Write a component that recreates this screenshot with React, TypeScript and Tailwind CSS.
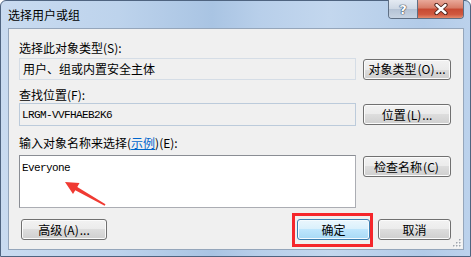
import type { ReactNode } from 'react';

const FONT = "font-['Noto_Sans_CJK_SC','Noto_Sans',sans-serif]";
const MONO = "font-['Liberation_Mono','DejaVu_Sans_Mono',monospace] text-[11px] tracking-[-0.6px]";

function Btn({ children, className = '', primary = false }: { children: ReactNode; className?: string; primary?: boolean }) {
  const look = primary
    ? 'border-[#3c7fb1] bg-[linear-gradient(#eaf6fd_0%,#d9f0fc_50%,#bee6fd_50%,#a7d9f5_100%)] shadow-[inset_0_0_0_1px_#f4fbff]'
    : 'border-[#707070] bg-[linear-gradient(#f2f2f2_0%,#ebebeb_50%,#dddddd_50%,#cfcfcf_100%)] shadow-[inset_0_0_0_1px_#fbfbfb]';
  return (
    <div className={`flex shrink-0 items-center justify-center rounded-[3px] border ${look} ${className}`}>
      {children}
    </div>
  );
}

function Hot({ k }: { k: string }) {
  return <span className="px-[1px]">({k})</span>;
}

export default function App() {
  return (
    <div className={`relative h-[257px] w-[471px] overflow-hidden bg-white text-[12px] leading-[14px] text-black ${FONT}`}>
      <div className="flex h-full w-full flex-col rounded-t-[6px] border border-[#4f6480] bg-[linear-gradient(90deg,#c9dbf0_0%,#bdd3ec_25%,#a9c4e3_45%,#b8cfea_55%,#c3d7ee_70%,#b2cbe8_90%,#bcd2ec_100%)]">
        {/* title bar */}
        <div className="flex h-[27px] shrink-0 items-start">
          <div className="self-center pl-[7px] text-[12px] leading-[14px] text-black">选择用户或组</div>
          <div className="ml-auto mr-[6px] -mt-px flex h-[19px] overflow-hidden rounded-b-[4px] border border-t-0 border-[#5f6f84]">
            <div className="flex w-[29px] items-center justify-center border-r border-[#5f6f84] bg-[linear-gradient(#e4eaf2_0%,#cdd7e4_50%,#b4c2d4_50%,#c7d3e2_100%)]">
              <span className="font-['DejaVu_Sans',sans-serif] text-[13px] font-bold leading-none text-white [text-shadow:0_0_1px_#2d3b50,0_0_1px_#2d3b50,0_0_1px_#2d3b50]">?</span>
            </div>
            <div className="flex w-[45px] items-center justify-center bg-[linear-gradient(#e9a99a_0%,#d77b66_45%,#c74a33_50%,#d0583f_80%,#e38a6c_100%)]">
              <svg width="14" height="12" viewBox="0 0 14 12">
                <path d="M2.5 2 L11.5 10 M11.5 2 L2.5 10" stroke="#4a2018" strokeWidth="4.2" strokeLinecap="round" />
                <path d="M2.5 2 L11.5 10 M11.5 2 L2.5 10" stroke="#ffffff" strokeWidth="2.4" strokeLinecap="round" />
              </svg>
            </div>
          </div>
        </div>

        {/* client area */}
        <div className="relative ml-[7px] mr-[6px] mb-[6px] flex flex-1 flex-col border border-[#95a6bb] bg-[#f0f0f0] pl-[10px] pr-[12px] pt-[12px]">
          <div>选择此对象类型(S):</div>
          <div className="mt-[3px] flex items-center gap-[7px]">
            <div className="flex h-[22px] w-[337px] items-center border border-[#d5dde6] bg-[#f0f0f0] pl-[3px]">
              用户、组或内置安全主体
            </div>
            <Btn className="h-[21px] w-[88px]">
              对象类型<Hot k="O" />...
            </Btn>
          </div>

          <div className="mt-[8px]">查找位置(F):</div>
          <div className="mt-[1px] flex items-center gap-[7px]">
            <div className={`flex h-[23px] w-[337px] items-center border border-[#bccbdb] bg-[#f0f0f0] pl-[2px] ${MONO}`}>
              LRGM-VVFHAEB2K6
            </div>
            <Btn className="h-[21px] w-[88px]">
              位置<Hot k="L" />...
            </Btn>
          </div>

          <div className="mt-[10px]">
            输入对象名称来选择(<span className="text-[#0066cc] underline">示例</span>)(E):
          </div>
          <div className="mt-[5px] flex items-start gap-[7px]">
            <div className={`h-[53px] w-[337px] border border-[#abadb3] border-l-[#8a8d94] border-t-[#8a8d94] bg-white pl-[2px] pt-[5px] leading-[14px] ${MONO}`}>
              Everyone
            </div>
            <Btn className="mt-[1px] h-[21px] w-[88px]">
              检查名称<Hot k="C" />
            </Btn>
          </div>

          <div className="mt-[11px] flex items-center">
            <Btn className="ml-[2px] h-[21px] w-[86px]">
              高级<Hot k="A" />...
            </Btn>
            <div className="relative ml-auto">
              <Btn primary className="h-[21px] w-[73px]">
                确定
              </Btn>
              <div className="pointer-events-none absolute -left-[5px] -right-[3px] -top-[6px] -bottom-[7px] border-[3px] border-[#f5262b]" />
            </div>
            <Btn className="ml-[8px] h-[21px] w-[73px]">
              取消
            </Btn>
          </div>

          {/* resize grip */}
          <svg className="absolute bottom-[1px] right-[1px]" width="11" height="11" viewBox="0 0 11 11">
            {[
              [8, 2], [5, 5], [8, 5], [2, 8], [5, 8], [8, 8],
            ].map(([x, y]) => (
              <g key={`${x}-${y}`}>
                <rect x={x + 1} y={y + 1} width="1.5" height="1.5" fill="#ffffff" />
                <rect x={x} y={y} width="1.5" height="1.5" fill="#a0a6ae" />
              </g>
            ))}
          </svg>
        </div>
      </div>

      {/* red annotation arrow */}
      <svg className="pointer-events-none absolute inset-0" width="471" height="257" viewBox="0 0 471 257">
        <polygon
          points="65,182 79.5,183 77.3,187 105.5,204.3 104.6,205.7 75.3,190.2 73,194"
          fill="#f03a32"
        />
      </svg>
    </div>
  );
}
